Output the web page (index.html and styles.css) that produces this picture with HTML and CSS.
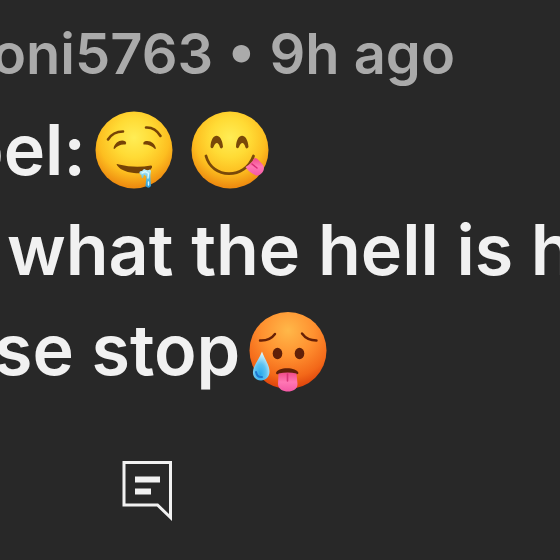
FILE: index.html
```
<!DOCTYPE html>
<html lang="en">
<head>
<meta charset="UTF-8">
<meta name="viewport" content="width=device-width, initial-scale=1.0">
<title>Comment</title>
<link rel="stylesheet" href="styles.css">
</head>
<body>

<article class="comment">
    <header class="meta">oni5763 • 9h ago</header>

    <div class="text">
        <p class="line line-label">
            <span>pel:</span>
            <!-- drooling face -->
            <svg class="emoji" viewBox="0 0 80 80" role="img" aria-label="Drooling face">
                <defs>
                    <radialGradient id="yellow" cx="50%" cy="34%" r="64%">
                        <stop offset="0" stop-color="#ffed55"/>
                        <stop offset=".4" stop-color="#ffdb35"/>
                        <stop offset=".72" stop-color="#fdbe20"/>
                        <stop offset="1" stop-color="#ee8c10"/>
                    </radialGradient>
                    <linearGradient id="water" x1="0" y1="0" x2="0" y2="1">
                        <stop offset="0" stop-color="#c9f4fb"/>
                        <stop offset=".5" stop-color="#5bbfe3"/>
                        <stop offset="1" stop-color="#2795d3"/>
                    </linearGradient>
                </defs>
                <circle cx="40" cy="40" r="38.5" fill="url(#yellow)"/>
                <g fill="none" stroke="#764306" stroke-width="2.6" stroke-linecap="round">
                    <path d="M14 29.5Q19 21.5 29 21.5"/>
                    <path d="M52 17.500Q61 17 66.500 26"/>
                </g>
                <g fill="#764306">
                    <path d="M19.500 38.500C21 32 27 29 31.500 31.500Q33 33 31.500 34.500C27 34 23.500 35.500 20.500 39Z"/>
                    <path d="M49.500 34.500Q48.500 32.500 50.500 31.500C56 30 60.500 33 62 38.500L61 39C57.500 35.500 54 34 49.500 34.500Z"/>
                    <path d="M22.500 54.500Q23 53.500 25 54.500Q41 58.500 57 55.500Q58.500 55.500 58 57.500C55 63 47 64 40 63C31 62 25 59 22.500 54.500Z"/>
                </g>
                <path d="M45.500 63.500Q45 60.500 48 61L50 59Q53 61 56 59.500L57 61Q56 65 56.500 69L57 76Q54.500 79.500 51.500 76L52.500 66.500L50 64.500L49 68Q47 68.500 47.500 65.500Z" fill="url(#water)"/>
                <path d="M48 63L51 61.500L54.500 63.500L54 68M54.500 72V75" fill="none" stroke="#d9faff" stroke-width="1.400" stroke-linecap="round"/>
            </svg>
            <!-- face savoring food -->
            <svg class="emoji" viewBox="0 0 80 80" role="img" aria-label="Face savoring food">
                <defs>
                    <linearGradient id="tongue" x1="0" y1="0" x2="0" y2="1">
                        <stop offset="0" stop-color="#f04b87"/>
                        <stop offset=".5" stop-color="#ff77b4"/>
                        <stop offset="1" stop-color="#f459a5"/>
                    </linearGradient>
                </defs>
                <circle cx="40" cy="40" r="38.500" fill="url(#yellow)"/>
                <g fill="#794809">
                    <path d="M20.500 37C21 22 32 22 33 37Q31.500 39.500 30 37.500C28.500 31.500 25.500 31.500 23.500 37Q22 39.500 20.500 37Z"/>
                    <path d="M46 37C46.500 22 57.500 22 58.500 37Q57 39.500 55.500 37.500C54 31.500 51 31.500 49 37Q47.500 39.500 46 37Z"/>
                </g>
                <path d="M16 46C22 69 55 70 63.500 46" fill="none" stroke="#794809" stroke-width="2.800" stroke-linecap="round"/>
                <path d="M55.500 57Q61 54 64.500 48Q67 47.500 69 50.500L73 55C76 60 71 66 66 65.500Q59 62.500 55.500 57Z" fill="url(#tongue)"/>
                <path d="M62 54L67 58" stroke="#d92c76" stroke-width="1.500" stroke-linecap="round"/>
            </svg>
        </p>
        <p class="line line-question">what the hell is h</p>
        <p class="line line-plea">
            <span>se stop</span>
            <!-- hot face -->
            <svg class="emoji" viewBox="0 0 80 80" role="img" aria-label="Hot face">
                <defs>
                    <radialGradient id="orange" cx="50%" cy="24%" r="76%">
                        <stop offset="0" stop-color="#ffb849"/>
                        <stop offset=".45" stop-color="#ff9130"/>
                        <stop offset=".8" stop-color="#f36819"/>
                        <stop offset="1" stop-color="#dd420b"/>
                    </radialGradient>
                    <radialGradient id="drop" cx="45%" cy="78%" r="70%">
                        <stop offset="0" stop-color="#29a9ed"/>
                        <stop offset=".5" stop-color="#5dc2f0"/>
                        <stop offset="1" stop-color="#d5f4ff"/>
                    </radialGradient>
                </defs>
                <circle cx="40" cy="40.500" r="38.500" fill="url(#orange)"/>
                <g fill="none" stroke="#672006" stroke-width="2.400" stroke-linecap="round">
                    <path d="M12 30.500Q22 31 27 24"/>
                    <path d="M54 23.500Q59 30.500 68.500 30.500"/>
                </g>
                <g fill="#602008">
                    <ellipse cx="29.500" cy="43.500" rx="4.800" ry="5.800"/>
                    <ellipse cx="51.500" cy="43.500" rx="4.800" ry="5.800"/>
                    <path d="M28 63C29 56.500 49 56.500 50.500 63Q50 65 47 64H31Q28 65 28 63Z"/>
                </g>
                <path d="M30.500 63.500Q40 61.500 48.500 63.500L49.500 74C49.500 79.500 44.500 81.500 40 81.500C35 81.500 30 79 30 74Z" fill="url(#tongue)"/>
                <path d="M39.500 64V71" stroke="#d83478" stroke-width="1.600" stroke-linecap="round"/>
                <path d="M14 41.500C17 50 21.500 55 21.500 61.500C21.500 67 17.500 70.500 13 70.500C8 70.500 4.500 67 5 61.500C5.500 55 11 50 14 41.500Z" fill="url(#drop)"/>
                <path d="M8 62Q9 67.500 14 67" fill="none" stroke="#1d77d1" stroke-width="2" stroke-linecap="round"/>
            </svg>
        </p>
    </div>

    <footer class="actions">
        <button class="reply" type="button" aria-label="Reply">
            <svg viewBox="0 0 50 62" aria-hidden="true">
                <path d="M2 2.500H48.500V57.500L35.500 45H2Z" fill="none" stroke="#f1f1f1" stroke-width="3"/>
                <path d="M13 19.500H38M13 31.500H29" fill="none" stroke="#f1f1f1" stroke-width="6"/>
            </svg>
        </button>
    </footer>
</article>

</body>
</html>
```

FILE: styles.css
```
body {
    margin: 0;
    background-color: #282828;
    color: #f1f1f1;
    font-family: Inter, "Liberation Sans", sans-serif;
    font-weight: 600;
}
.comment {
    overflow: hidden;
    white-space: nowrap;
}
.meta {
    margin-left: -8px;
    padding-top: 8px;
    font-size: 56px;
    line-height: 92px;
    color: #aaa;
}
.text {
    font-size: 70px;
    line-height: 100px;
}
.line {
    display: flex;
    align-items: center;
    gap: 8px;
    margin: 0;
}
.line-label {
    gap: 16px;
    margin-left: -40px;
}
.line-label span {
    margin-right: -8px;
}
.line-question {
    margin-left: 7px;
}
.line-plea {
    margin-left: -6px;
}
.emoji {
    flex: none;
    width: 80px;
    height: 80px;
    overflow: visible;
}
.actions {
    padding: 60px 122px 38px;
}
.reply {
    display: block;
    padding: 0;
    border: none;
    background: none;
    cursor: pointer;
}
.reply svg {
    display: block;
    width: 50px;
    height: 62px;
}
```
